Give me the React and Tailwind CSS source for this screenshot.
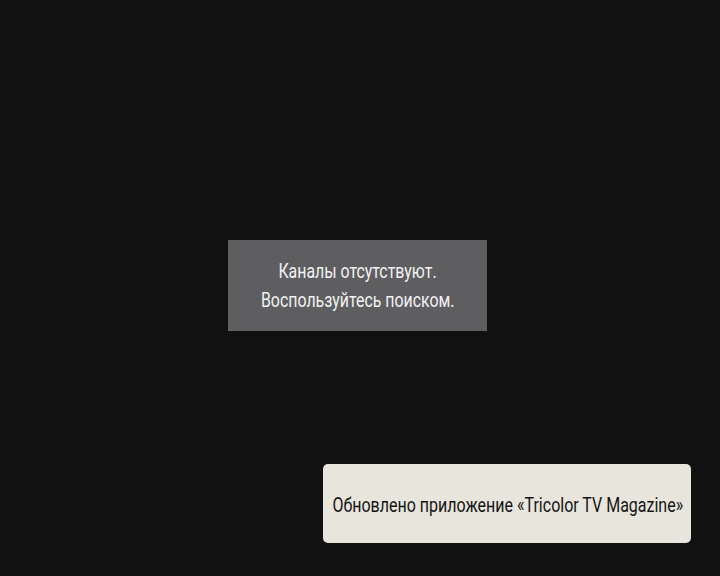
export default function App() {
  return (
    <div
      className="relative w-[720px] h-[576px] bg-[#111111] overflow-hidden"
      style={{ fontFamily: "Roboto, 'Noto Sans', sans-serif" }}
    >
      <div className="pt-[240px] pl-[228px]">
        <div className="w-[259px] h-[91px] bg-[#5e5e61] flex flex-col items-center justify-center text-[#f2f2f2] text-[20px] leading-[29px]">
          <span className="inline-block scale-x-[0.795] whitespace-nowrap">Каналы отсутствуют.</span>
          <span className="inline-block scale-x-[0.795] whitespace-nowrap">Воспользуйтесь поиском.</span>
        </div>
      </div>
      <div className="absolute left-[323px] top-[464px] w-[368px] h-[79px] rounded-[5px] bg-[#e8e5dc] flex items-center justify-center">
        <span className="inline-block scale-x-[0.8] whitespace-nowrap text-[20px] text-[#141414] pt-[2px] pl-[3px]">
          Обновлено приложение «Tricolor TV Magazine»
        </span>
      </div>
    </div>
  );
}
